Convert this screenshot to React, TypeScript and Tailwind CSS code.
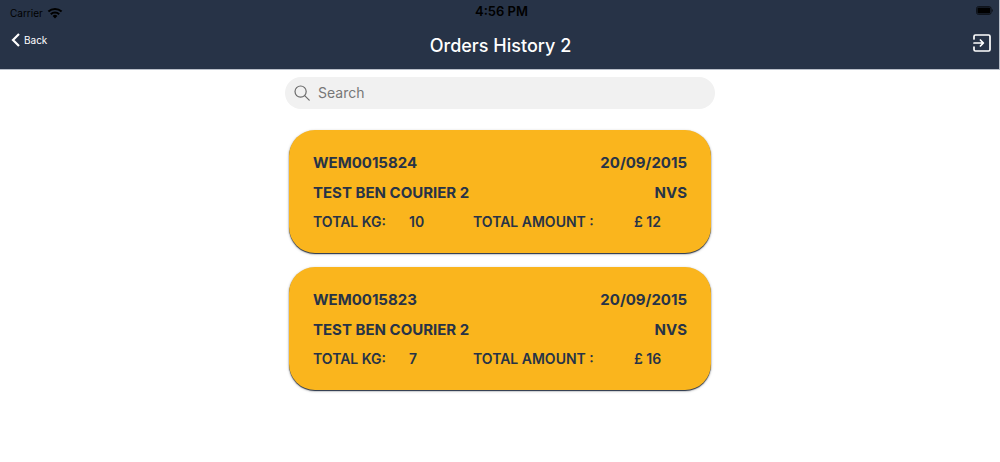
import React from 'react';

interface Order {
  id: string;
  date: string;
  courier: string;
  company: string;
  totalKg: number;
  totalAmount: number;
}

const orders: Order[] = [
  {
    id: 'WEM0015824',
    date: '20/09/2015',
    courier: 'TEST BEN COURIER 2',
    company: 'NVS',
    totalKg: 10,
    totalAmount: 12,
  },
  {
    id: 'WEM0015823',
    date: '20/09/2015',
    courier: 'TEST BEN COURIER 2',
    company: 'NVS',
    totalKg: 7,
    totalAmount: 16,
  },
];

function WifiIcon() {
  return (
    <svg className="h-3 w-4" viewBox="0 0 16 12" fill="none" stroke="currentColor" strokeWidth="2.1">
      <path d="M1.4 4.6a9.6 9.6 0 0 1 13.2 0" />
      <path d="M3.8 7.2a6.1 6.1 0 0 1 8.4 0" />
      <path d="M8 11.4 5.6 9a3.4 3.4 0 0 1 4.8 0z" fill="currentColor" stroke="none" />
    </svg>
  );
}

function BatteryIcon() {
  return (
    <svg className="h-[9px] w-[17px]" viewBox="0 0 17 9" fill="none">
      <rect x="0.5" y="0.5" width="14.6" height="8" rx="2" stroke="#000" strokeOpacity="0.6" />
      <rect x="1.4" y="1.4" width="12.8" height="6.2" rx="1" fill="#000" />
      <path d="M15.9 3v3c.7-.3 1-.8 1-1.5s-.3-1.2-1-1.5z" fill="#000" fillOpacity="0.6" />
    </svg>
  );
}

function LogoutIcon() {
  return (
    <svg
      className="h-[18px] w-[18px]"
      viewBox="0 0 18 18"
      fill="none"
      stroke="currentColor"
      strokeWidth="1.7"
      strokeLinecap="round"
      strokeLinejoin="round"
    >
      <path d="M1 5V2.4C1 1.5 1.5 1 2.4 1h13.2c.9 0 1.4.5 1.4 1.4v13.2c0 .9-.5 1.4-1.4 1.4H2.4c-.9 0-1.4-.5-1.4-1.4V13" />
      <path d="M1 9h9.2M7.4 6l3 3-3 3" />
    </svg>
  );
}

function StatusBar() {
  return (
    <div className="grid h-6 grid-cols-3 items-center pr-1.5 pl-2.5 text-black">
      <div className="flex items-center gap-1 pt-0.5 text-[10px]">
        <span>Carrier</span>
        <WifiIcon />
      </div>
      <span className="text-center text-[13px] font-semibold">4:56 PM</span>
      <div className="flex justify-end pb-1">
        <BatteryIcon />
      </div>
    </div>
  );
}

function OrderCard({ order }: { order: Order }) {
  return (
    <li className="rounded-[26px] bg-[#fab51d] px-6 pt-[21px] pb-[19px] font-semibold text-[#273347] shadow-[0_1px_1px_#273347,0_1px_3px_rgba(0,0,0,0.3)]">
      <div className="flex h-6 items-center justify-between text-[15px] font-bold">
        <span>{order.id}</span>
        <span>{order.date}</span>
      </div>
      <div className="mt-1.5 flex h-6 items-center justify-between text-[15px] font-bold">
        <span>{order.courier}</span>
        <span>{order.company}</span>
      </div>
      <div className="mt-[5px] grid h-6 grid-cols-[96px_64px_161px_1fr] items-center text-sm">
        <span>TOTAL KG:</span>
        <span>{order.totalKg}</span>
        <span>TOTAL AMOUNT :</span>
        <span>£ {order.totalAmount}</span>
      </div>
    </li>
  );
}

export default function App() {
  return (
    <div className="min-h-screen bg-white font-['Inter',sans-serif]">
      <header className="border-r border-b border-[#b9bfc9] bg-[#273347] pb-[11px]">
        <StatusBar />
        <div className="grid grid-cols-3 items-center pr-2 pl-2.5 text-white">
          <button type="button" className="flex items-center gap-1 self-start pt-2 text-[10px] leading-4">
            <svg className="h-3.5 w-2.5" viewBox="0 0 10 14" fill="none" stroke="currentColor" strokeWidth="2.2">
              <path d="M9 1 3 7l6 6" />
            </svg>
            Back
          </button>
          <h1 className="pt-2.5 text-center text-lg leading-6 font-medium">Orders History 2</h1>
          <button type="button" aria-label="Log out" className="justify-self-end pt-1">
            <LogoutIcon />
          </button>
        </div>
      </header>

      <main className="mx-auto w-[43%] min-w-[430px] pt-[7px]">
        <label className="flex h-8 items-center gap-2 rounded-full bg-[#f1f1f1] pl-[9px]">
          <svg className="h-4 w-4 shrink-0 text-[#6b6b6b]" viewBox="0 0 16 16" fill="none" stroke="currentColor" strokeWidth="1.2">
            <circle cx="6.6" cy="6.6" r="5.6" />
            <path d="m10.7 10.7 4.5 4.5" strokeLinecap="round" />
          </svg>
          <input
            type="search"
            aria-label="Search"
            placeholder="Search"
            className="w-full bg-transparent text-sm text-[#273347] outline-none placeholder:text-[#777777]"
          />
        </label>

        <ul className="mt-[21px] flex flex-col gap-3.5 px-1">
          {orders.map(order => (
            <OrderCard key={order.id} order={order} />
          ))}
        </ul>
      </main>
    </div>
  );
}
